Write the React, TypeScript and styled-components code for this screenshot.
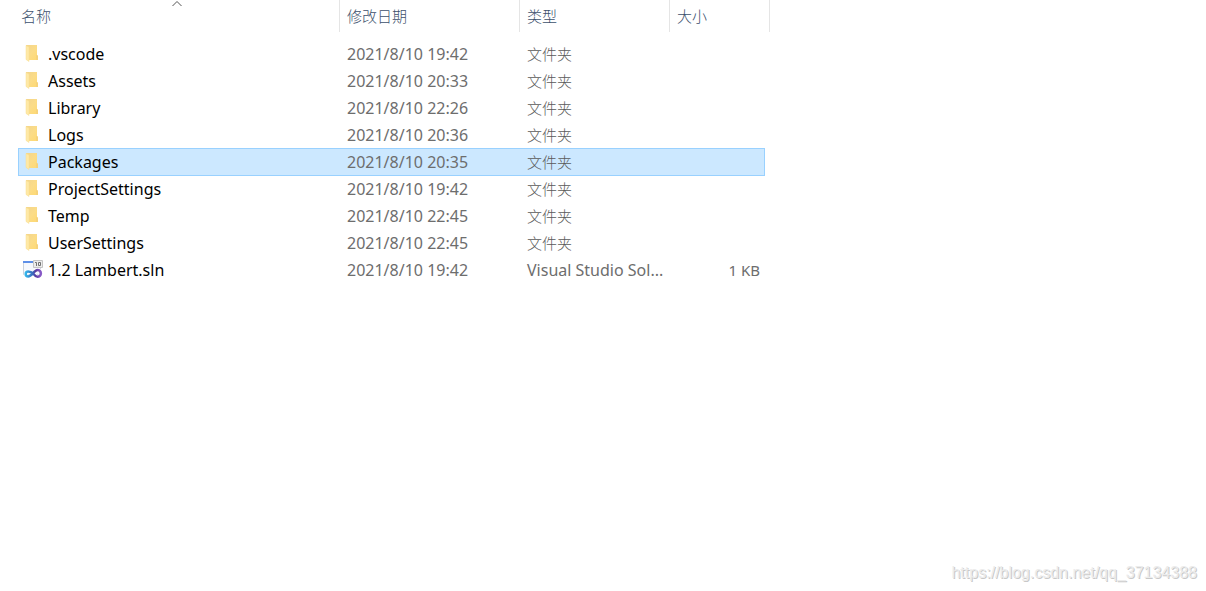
import React from "react";
import styled, { createGlobalStyle, css } from "styled-components";

const GlobalStyle = createGlobalStyle`
  * { box-sizing: border-box; }
  body {
    margin: 0;
    background: #fff;
    color: #6d6d6d;
    font-family: "Noto Sans", "Noto Sans CJK SC", sans-serif;
    font-size: 16px;
  }
`;

const Page = styled.main`
  display: flex;
  flex-direction: column;
  min-height: 100vh;
  padding-left: 14px;
`;

const FileTable = styled.table`
  width: 756px;
  table-layout: fixed;
  border-collapse: separate;
  border-spacing: 0;
  white-space: nowrap;
`;

const Column = styled.col<{ $width: number }>`
  width: ${(p) => p.$width}px;
`;

const HeaderCell = styled.th`
  position: relative;
  height: 32px;
  padding: 0 7px;
  border-right: 1px solid #e5e5e5;
  color: #3c506c;
  font-family: "Noto Sans CJK SC", sans-serif;
  font-size: 15px;
  font-weight: 300;
  line-height: 20px;
  text-align: left;
`;

const SortMark = styled.svg`
  position: absolute;
  top: 0;
  left: 50%;
  width: 12px;
  height: 7px;
  transform: translateX(-50%);
`;

const FileBody = styled.tbody`
  &::before {
    content: "";
    display: block;
    height: 8px;
  }
`;

const FileRow = styled.tr`
  height: 27px;
`;

const Cell = styled.td<{ $selected: boolean }>`
  padding: 2px 0 0 7px;
  line-height: 25px;
  overflow: hidden;
  text-overflow: ellipsis;
  ${(p) =>
    p.$selected &&
    css`
      background: #cce8ff;
      box-shadow: inset 0 1px 0 #99d1ff, 0 1px 0 #99d1ff;
    `}
`;

const FolderTypeCell = styled(Cell)`
  padding-top: 0;
  color: #5a5a5a;
  font-family: "Noto Sans CJK SC", sans-serif;
  font-size: 15px;
  font-weight: 300;
`;

const NameCell = styled(Cell)`
  padding: 2px 4px 0;
  color: #000;
  border-left: ${(p) => (p.$selected ? "1px solid #99d1ff" : "1px solid transparent")};
`;

const SizeCell = styled(Cell)`
  padding: 2px 4px 0;
  font-size: 15px;
  text-align: right;
  border-right: ${(p) => (p.$selected ? "1px solid #99d1ff" : "1px solid transparent")};
`;

const Edge = styled.td`
  padding: 0;
`;

const NameLabel = styled.span`
  display: flex;
  align-items: flex-start;
  gap: 5px;
`;

const Icon = styled.svg`
  flex: none;
  width: 20px;
  height: 20px;
  margin-top: 2px;
`;

const Watermark = styled.footer`
  margin-top: auto;
  padding: 0 9px 8px 0;
  color: #ececec;
  font-family: "Liberation Sans", sans-serif;
  font-size: 16px;
  line-height: 20px;
  text-align: right;
  text-shadow: 1px 1px 0 #c8c8c8;
`;

function FolderIcon() {
  return (
    <Icon viewBox="0 0 20 20" aria-hidden="true">
      <defs>
        <linearGradient id="folderBack" x1="0" y1="0" x2="1" y2="1">
          <stop offset="0" stopColor="#f3d58c" />
          <stop offset=".5" stopColor="#fbdc88" />
          <stop offset="1" stopColor="#ffd970" />
        </linearGradient>
      </defs>
      <path d="M3 1h11v10l1 1v4H6L3 15z" fill="url(#folderBack)" />
      <path d="M13 11h1l1 1v4h-2z" fill="#f5d27c" />
      <path d="M3 1.500L6 3v14.500l-3-2z" fill="#ffe9a6" stroke="#f7dc91" strokeWidth=".5" />
    </Icon>
  );
}

function SolutionIcon() {
  return (
    <Icon viewBox="0 0 20 20" aria-hidden="true">
      <defs>
        <linearGradient id="loop" x1="0" x2="1">
          <stop offset="0" stopColor="#35b5ea" />
          <stop offset=".5" stopColor="#3b62b8" />
          <stop offset=".65" stopColor="#5b3ba0" />
          <stop offset="1" stopColor="#8a5cc8" />
        </linearGradient>
      </defs>
      <path d="M.5 1.500h17v13H.5z" fill="#f5f8fd" stroke="#cbd2dc" />
      <path d="M0 1h12v2H0z" fill="#5d8fe8" />
      <path d="M10.500.5h9v7h-9z" fill="#ececec" stroke="#c4c4c4" />
      <path d="M12 2.500h1.500V6M15.500 2.500h2v3h-2z" fill="none" stroke="#666" strokeWidth=".9" />
      <path
        d="M10.500 14C8.500 12 7 11.500 5.500 11.500a2.500 2.500 0 0 0 0 5c3.500 0 6-6.500 9-6.500a3.400 3.400 0 0 1 0 6.800c-1.500 0-2.500-1-4-2.800z"
        fill="none"
        stroke="#fff"
        strokeWidth="4"
      />
      <path
        d="M10.500 14C8.500 12 7 11.500 5.200 11.500a2.500 2.500 0 0 0 0 5c3.500 0 6-6.500 9.300-6.500a3.400 3.400 0 0 1 0 6.800c-1.500 0-2.500-1-4-2.800z"
        fill="none"
        stroke="url(#loop)"
        strokeWidth="2.500"
      />
    </Icon>
  );
}

type Entry = { name: string; date: string; size?: string; type?: string; selected?: boolean };

const entries: Entry[] = [
  { name: ".vscode", date: "2021/8/10 19:42" },
  { name: "Assets", date: "2021/8/10 20:33" },
  { name: "Library", date: "2021/8/10 22:26" },
  { name: "Logs", date: "2021/8/10 20:36" },
  { name: "Packages", date: "2021/8/10 20:35", selected: true },
  { name: "ProjectSettings", date: "2021/8/10 19:42" },
  { name: "Temp", date: "2021/8/10 22:45" },
  { name: "UserSettings", date: "2021/8/10 22:45" },
  { name: "1.2 Lambert.sln", date: "2021/8/10 19:42", type: "Visual Studio Sol...", size: "1 KB" },
];

export default function App() {
  return (
    <>
      <GlobalStyle />
      <Page>
        <FileTable>
          <colgroup>
            <Column $width={4} />
            <Column $width={322} />
            <Column $width={180} />
            <Column $width={150} />
            <Column $width={95} />
            <Column $width={5} />
          </colgroup>
          <thead>
            <tr>
              <HeaderCell colSpan={2} scope="col" aria-sort="ascending">
                名称
                <SortMark viewBox="0 0 12 7" aria-hidden="true">
                  <path d="M1.500 6L6 1.500 10.500 6" fill="none" stroke="#555" />
                </SortMark>
              </HeaderCell>
              <HeaderCell scope="col">修改日期</HeaderCell>
              <HeaderCell scope="col">类型</HeaderCell>
              <HeaderCell scope="col" colSpan={2}>
                大小
              </HeaderCell>
            </tr>
          </thead>
          <FileBody>
            {entries.map((e) => {
              const selected = !!e.selected;
              return (
                <FileRow key={e.name} aria-selected={selected}>
                  <Edge />
                  <NameCell $selected={selected}>
                    <NameLabel>
                      {e.type ? <SolutionIcon /> : <FolderIcon />}
                      {e.name}
                    </NameLabel>
                  </NameCell>
                  <Cell $selected={selected}>{e.date}</Cell>
                  {e.type ? (
                    <Cell $selected={selected}>{e.type}</Cell>
                  ) : (
                    <FolderTypeCell $selected={selected}>文件夹</FolderTypeCell>
                  )}
                  <SizeCell $selected={selected}>{e.size}</SizeCell>
                  <Edge />
                </FileRow>
              );
            })}
          </FileBody>
        </FileTable>
        <Watermark>https://blog.csdn.net/qq_37134388</Watermark>
      </Page>
    </>
  );
}
